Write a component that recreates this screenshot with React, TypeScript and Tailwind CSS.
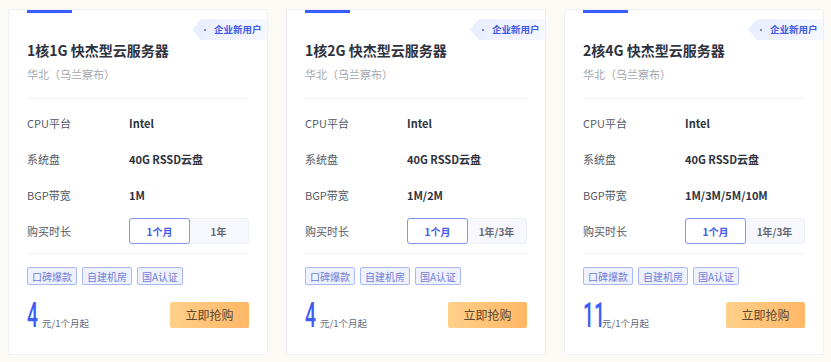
import React from "react";

type Plan = {
  title: string;
  bandwidth: string;
  second: string;
  price: string;
  priceW: string;
};

const plans: Plan[] = [
  { title: "1核1G 快杰型云服务器", bandwidth: "1M", second: "1年", price: "4", priceW: "w-[15px]" },
  { title: "1核2G 快杰型云服务器", bandwidth: "1M/2M", second: "1年/3年", price: "4", priceW: "w-[15px]" },
  { title: "2核4G 快杰型云服务器", bandwidth: "1M/3M/5M/10M", second: "1年/3年", price: "11", priceW: "w-[19px]" },
];

function Row({ label, children }: { label: string; children: React.ReactNode }) {
  return (
    <div className="flex h-[36px] items-center">
      <div className="w-[102px] text-[11px] text-[#555a66]">{label}</div>
      <div className="flex-1 text-[11px] font-bold text-[#2f3340]">{children}</div>
    </div>
  );
}

function Card({ p }: { p: Plan }) {
  return (
    <div className="relative flex h-[346px] w-[260px] shrink-0 flex-col border border-[#eef0f4] bg-white px-[18px]">
      <div className="h-[3px] w-[45px] bg-[#3a5bff]" />
      <div className="absolute right-0 top-[9px] flex h-[21px] w-[75px] items-center bg-gradient-to-r from-[#e9eeff] to-[#f6f8ff] pl-[12px] [clip-path:polygon(9px_0,100%_0,100%_100%,9px_100%,0_50%)]">
        <span className="mr-[8px] h-[2px] w-[2px] rounded-full bg-[#4a66ea]" />
        <span className="text-[9.5px] font-bold leading-none text-[#3f5ce6]">企业新用户</span>
      </div>
      <div className="mt-[25px] text-[14px] font-bold leading-[24px] text-[#2f3340]">{p.title}</div>
      <div className="mt-[2px] text-[11px] leading-[20px] text-[#a3a6ae]">华北（乌兰察布）</div>
      <div className="mt-[14px] h-px bg-[#f0f1f5]" />
      <div className="flex flex-col pt-[6px]">
        <Row label="CPU平台">Intel</Row>
        <Row label="系统盘">40G RSSD云盘</Row>
        <Row label="BGP带宽">{p.bandwidth}</Row>
        <div className="flex h-[36px] items-center">
          <div className="w-[102px] text-[11px] text-[#555a66]">购买时长</div>
          <div className="flex h-[26px] w-[120px] rounded-[3px] border border-[#eef0f8] bg-[#f7f8fd]">
            <div className="-m-px flex h-[26px] w-[61px] items-center justify-center rounded-[3px] border border-[#8196f4] bg-white text-[10px] font-bold text-[#3f5ce6]">
              1个月
            </div>
            <div className="flex flex-1 items-center justify-center text-[10px] font-bold text-[#666a75]">
              {p.second}
            </div>
          </div>
        </div>
      </div>
      <div className="mt-[4px] h-px bg-[#f0f1f5]" />
      <div className="mt-[13px] flex gap-[5px]">
        {["口碑爆款", "自建机房", "国A认证"].map((t) => (
          <div
            key={t}
            className="flex h-[18px] items-center rounded-[2px] border border-[#a9b8f6] bg-[#eef1fe] px-[4px] text-[10px] text-[#6d80d8]"
          >
            {t}
          </div>
        ))}
      </div>
      <div className="mt-[17px] flex h-[26px] items-end justify-between">
        <div className="-mb-[5px] flex items-baseline">
          <span className={`${p.priceW} inline-block overflow-visible`}>
            <span className="inline-block origin-left scale-x-[0.55] font-['Roboto'] text-[35px] font-medium leading-none text-[#3d5cf5]">
              {p.price}
            </span>
          </span>
          <span className="text-[9.5px] text-[#666a75]">元/1个月起</span>
        </div>
        <div className="flex h-[26px] w-[79px] items-center justify-center rounded-[2px] bg-gradient-to-r from-[#ffd08a] to-[#ffb766] text-[12px] text-[#5e4632]">
          立即抢购
        </div>
      </div>
    </div>
  );
}

export default function App() {
  return (
    <div className="flex h-[362px] w-[831px] gap-[18px] bg-[#fcfaf5] pl-[8px] pt-[9px] font-['Noto_Sans_CJK_SC',sans-serif]">
      {plans.map((p) => (
        <Card key={p.title} p={p} />
      ))}
    </div>
  );
}
